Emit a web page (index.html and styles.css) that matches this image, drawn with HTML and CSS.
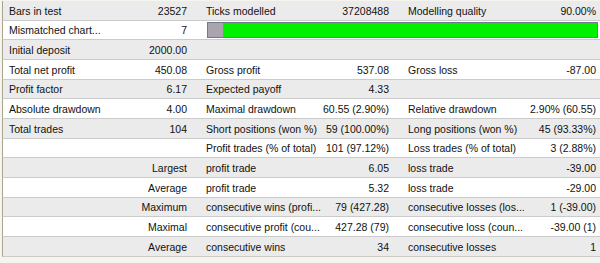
FILE: index.html
```html
<!DOCTYPE html>
<html>
<head>
<meta charset="utf-8">
<link rel="stylesheet" href="styles.css">
</head>
<body>
<div class="report">
  <div class="row grey">
    <div class="g g1"><span>Bars in test</span><span>23527</span></div>
    <div class="g g2"><span>Ticks modelled</span><span>37208488</span></div>
    <div class="g g3"><span>Modelling quality</span><span>90.00%</span></div>
  </div>
  <div class="row white">
    <div class="g g1"><span>Mismatched chart...</span><span>7</span></div>
    <div class="g gbar"><div class="bar"><div class="bar-bad"></div><div class="bar-good"></div></div></div>
  </div>
  <div class="row grey">
    <div class="g g1"><span>Initial deposit</span><span>2000.00</span></div>
    <div class="g g2"></div>
    <div class="g g3"></div>
  </div>
  <div class="row white">
    <div class="g g1"><span>Total net profit</span><span>450.08</span></div>
    <div class="g g2"><span>Gross profit</span><span>537.08</span></div>
    <div class="g g3"><span>Gross loss</span><span>-87.00</span></div>
  </div>
  <div class="row grey">
    <div class="g g1"><span>Profit factor</span><span>6.17</span></div>
    <div class="g g2"><span>Expected payoff</span><span>4.33</span></div>
    <div class="g g3"></div>
  </div>
  <div class="row white">
    <div class="g g1"><span>Absolute drawdown</span><span>4.00</span></div>
    <div class="g g2"><span>Maximal drawdown</span><span>60.55 (2.90%)</span></div>
    <div class="g g3"><span>Relative drawdown</span><span>2.90% (60.55)</span></div>
  </div>
  <div class="row grey">
    <div class="g g1"><span>Total trades</span><span>104</span></div>
    <div class="g g2"><span>Short positions (won %)</span><span>59 (100.00%)</span></div>
    <div class="g g3"><span>Long positions (won %)</span><span>45 (93.33%)</span></div>
  </div>
  <div class="row white">
    <div class="g g1"></div>
    <div class="g g2"><span>Profit trades (% of total)</span><span>101 (97.12%)</span></div>
    <div class="g g3"><span>Loss trades (% of total)</span><span>3 (2.88%)</span></div>
  </div>
  <div class="row grey">
    <div class="g g1 right"><span>Largest</span></div>
    <div class="g g2"><span>profit trade</span><span>6.05</span></div>
    <div class="g g3"><span>loss trade</span><span>-39.00</span></div>
  </div>
  <div class="row white">
    <div class="g g1 right"><span>Average</span></div>
    <div class="g g2"><span>profit trade</span><span>5.32</span></div>
    <div class="g g3"><span>loss trade</span><span>-29.00</span></div>
  </div>
  <div class="row grey">
    <div class="g g1 right"><span>Maximum</span></div>
    <div class="g g2"><span>consecutive wins (profi...</span><span>79 (427.28)</span></div>
    <div class="g g3"><span>consecutive losses (los...</span><span>1 (-39.00)</span></div>
  </div>
  <div class="row white">
    <div class="g g1 right"><span>Maximal</span></div>
    <div class="g g2"><span>consecutive profit (cou...</span><span>427.28 (79)</span></div>
    <div class="g g3"><span>consecutive loss (coun...</span><span>-39.00 (1)</span></div>
  </div>
  <div class="row grey">
    <div class="g g1 right"><span>Average</span></div>
    <div class="g g2"><span>consecutive wins</span><span>34</span></div>
    <div class="g g3"><span>consecutive losses</span><span>1</span></div>
  </div>
</div>
</body>
</html>
```
FILE: styles.css
```css
html, body {
  margin: 0;
  padding: 0;
  background: #ffffff;
}
body {
  width: 600px;
  height: 263px;
  overflow: hidden;
  font-family: "Liberation Sans", Arial, sans-serif;
  font-size: 10.5px;
  color: #111;
}
.report {
  padding-top: 1px;
  padding-left: 2px;
  background: #f6f4ee;
  height: 263px;
  box-sizing: border-box;
}
.row {
  display: grid;
  grid-template-columns: 194px 201px 1fr;
  height: 19.667px;
  box-sizing: border-box;
  border-bottom: 1px solid #cbcbcb;
  border-left: 1px solid #a8a48e;
  align-items: center;
}
.row.grey { background: #ebebeb; }
.row.white { background: #ffffff; }
.g {
  display: flex;
  justify-content: space-between;
  align-items: center;
  gap: 6px;
  white-space: nowrap;
  padding-top: 1px;
}
.g1 { padding-left: 6px; padding-right: 10px; }
.g2 { padding-left: 9px; padding-right: 9px; }
.g3 { padding-left: 10px; padding-right: 4px; }
.g.right { justify-content: flex-end; }
.gbar {
  grid-column: 2 / 4;
  padding: 0 2px 0 10px;
}
.bar {
  flex: 1;
  height: 16px;
  box-sizing: border-box;
  border: 1px solid #6c7c8c;
  display: flex;
}
.bar-bad {
  width: 15px;
  background: #a9a4ae;
}
.bar-good {
  flex: 1;
  background: #00f000;
}
```
